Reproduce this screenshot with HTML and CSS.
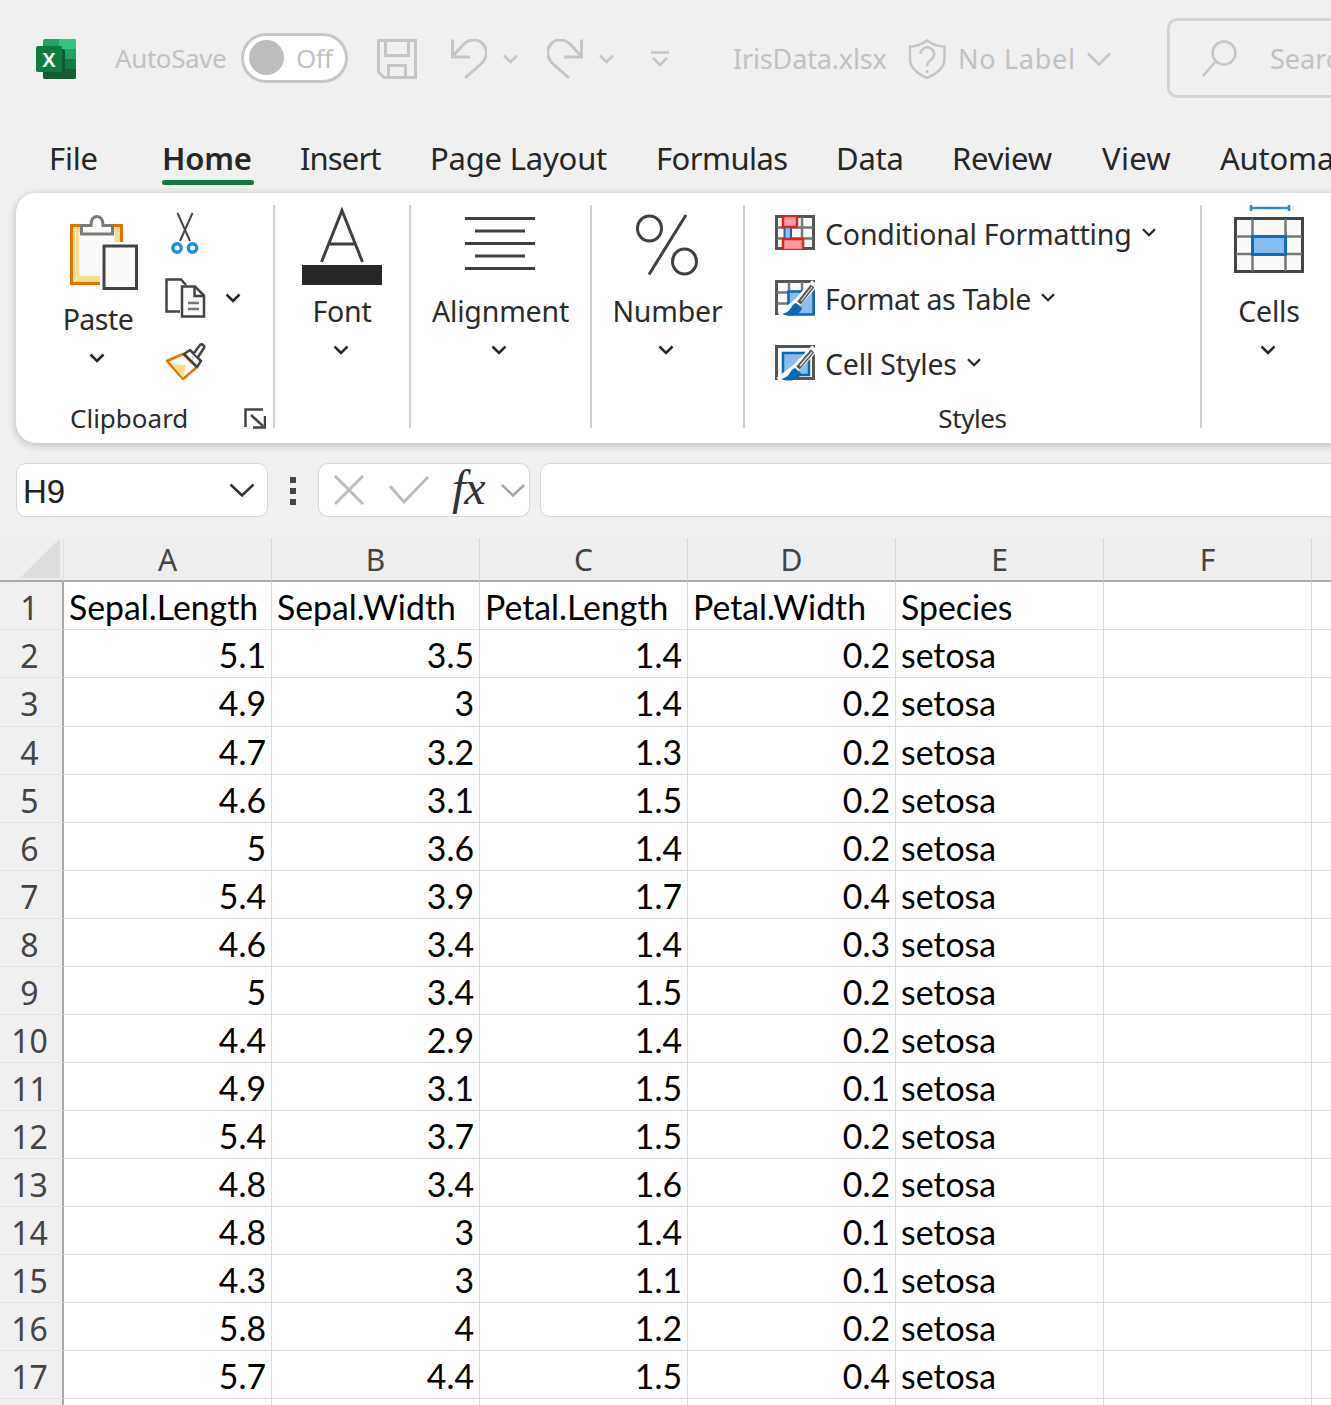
FILE: index.html
```html
<!DOCTYPE html>
<html lang="en">
<head>
<meta charset="utf-8">
<title>IrisData.xlsx</title>
<link rel="stylesheet" href="styles.css">
</head>
<body>
<div class="app">
  <header class="titlebar">
    <svg class="logo" width="40" height="40" viewBox="36 38 40 40">
      <rect x="43" y="38" width="33" height="40" rx="2" fill="#21a366"/>
      <path d="M59 38h15a2 2 0 0 1 2 2v8H59z" fill="#33c481"/>
      <path d="M59 58h17v10H59z" fill="#107c41"/>
      <path d="M43 68h33v8a2 2 0 0 1-2 2H45a2 2 0 0 1-2-2z" fill="#185c37"/>
      <rect x="43" y="48" width="22" height="26" rx="2" fill="#0f5a32"/>
      <rect x="36" y="45" width="26" height="26" rx="2" fill="#107c41"/>
      <text x="49" y="65.500" class="logo-x">X</text>
    </svg>
    <span class="t-dim t-autosave">AutoSave</span>
    <div class="toggle"><span class="knob"></span><span class="t-dim toggle-text">Off</span></div>
    <svg class="ml-save" width="40" height="40" viewBox="377 39 40 40" fill="none" stroke="#c6c6c6" stroke-width="3">
      <path d="M378.500 40.500H415.500V77.500H384L378.500 72z"/>
      <path d="M385.500 41V55.500H408.500V41"/>
      <path d="M388.500 77V65.500H405.500V77"/>
    </svg>
    <svg class="ml-undo" width="36" height="40" viewBox="451 39 36 40" fill="none" stroke="#c6c6c6" stroke-width="3">
      <path d="M452.500 39.500V57H470"/>
      <path d="M453 56L462 46C468 39 478 38 483 44C488 50 487 57 482 63L465 78"/>
    </svg>
    <svg class="ml-chev" width="15" height="10" viewBox="0 0 15 10" fill="none" stroke="#c6c6c6" stroke-width="2.500"><path d="M1 1.500L7.500 8L14 1.500"/></svg>
    <svg class="ml-redo" width="36" height="40" viewBox="547 39 36 40" fill="none" stroke="#c6c6c6" stroke-width="3">
      <path d="M581.500 39.500V57H564"/>
      <path d="M581 56L572 46C566 39 556 38 551 44C546 50 547 57 552 63L569 78"/>
    </svg>
    <svg class="ml-chev" width="15" height="10" viewBox="0 0 15 10" fill="none" stroke="#c6c6c6" stroke-width="2.500"><path d="M1 1.500L7.500 8L14 1.500"/></svg>
    <svg class="ml-qat" width="18" height="16" viewBox="0 0 18 16" fill="none" stroke="#c6c6c6" stroke-width="2.500"><path d="M0 1.500H18M2 7L9 14L16 7"/></svg>
    <span class="t-dim t-file">IrisData.xlsx</span>
    <svg class="ml-shield" width="38" height="40" viewBox="908 38 38 40" fill="none" stroke="#c6c6c6" stroke-width="2.500">
      <path d="M927 39.500C921 44 915 45.500 910 45.500V58C910 67 918 73 927 77C936 73 944.500 67 944.500 58V45.500C939 45.500 933 44 927 39.500Z"/>
      <path d="M920.500 53a6.800 6.800 0 1 1 11 5.500c-3 2-4.500 3.500-4.500 7"/>
      <path d="M927 69v3"/>
    </svg>
    <span class="t-dim t-label">No Label</span>
    <svg class="ml-labelchev" width="24" height="14" viewBox="0 0 24 14" fill="none" stroke="#c6c6c6" stroke-width="2.500"><path d="M1 1.500L12 12.500L23 1.500"/></svg>
    <div class="search">
      <svg width="36" height="38" viewBox="1201 39 36 38" fill="none" stroke="#c6c6c6" stroke-width="2.500">
        <circle cx="1224" cy="52" r="11.500"/><path d="M1215.500 60.500L1203 75"/>
      </svg>
      <span class="t-dim t-search">Search</span>
    </div>
  </header>

  <nav class="tabs">
    <span class="tab">File</span>
    <div class="tab tab-home">Home<span class="tab-bar"></span></div>
    <span class="tab tab-insert">Insert</span>
    <span class="tab">Page Layout</span>
    <span class="tab tab-formulas">Formulas</span>
    <span class="tab">Data</span>
    <span class="tab">Review</span>
    <span class="tab tab-view">View</span>
    <span class="tab">Automate</span>
  </nav>

  <section class="ribbon">
    <div class="group g-clip">
      <div class="clip-top">
        <div class="paste">
          <svg class="paste-icon" width="68" height="88" viewBox="70 205 68 88">
            <rect x="71.500" y="225.500" width="50" height="58" fill="#fddc8f" stroke="#e67300" stroke-width="3"/>
            <rect x="79" y="232" width="36" height="44" fill="#fafafa"/>
            <path d="M81.500 225.500H91C91 219 93 216.500 97 216.500C101 216.500 103 219 103 225.500H112.500V234H81.500z" fill="#fafafa" stroke="#7d7a76" stroke-width="3"/>
            <rect x="100" y="242" width="38" height="50" fill="#fff"/>
            <rect x="104" y="246" width="32.500" height="42.500" fill="#fafafa" stroke="#444" stroke-width="3"/>
          </svg>
          <span class="rlabel paste-label">Paste</span>
          <svg class="chev" width="16" height="10" viewBox="0 0 16 10" fill="none" stroke="#262626" stroke-width="2.500"><path d="M1.500 1.500L8 8L14.500 1.500"/></svg>
        </div>
        <div class="clip-tools">
          <div class="tool">
            <svg width="44" height="46" viewBox="163 210 44 46" fill="none">
              <path d="M177.500 213L190 241M192.500 213L180 241" stroke="#444" stroke-width="2"/>
              <circle cx="177" cy="248" r="4.200" stroke="#1e8fd5" stroke-width="3.400" fill="#fff"/>
              <circle cx="192.500" cy="248" r="4.200" stroke="#1e8fd5" stroke-width="3.400" fill="#fff"/>
            </svg>
          </div>
          <div class="tool">
            <svg width="44" height="44" viewBox="163 276 44 44" fill="none" stroke="#444" stroke-width="2.500">
              <path d="M180 311.500H166.500V279.500H181L186 285"/>
              <path d="M182 286.500H195L204 295.500V316.500H182z" fill="#fafafa"/>
              <path d="M194.500 287V296H203.500"/>
              <path d="M188 303H199M188 309H199" stroke="#777"/>
            </svg>
            <svg class="chev-copy" width="16" height="10" viewBox="0 0 16 10" fill="none" stroke="#262626" stroke-width="2.500"><path d="M1.500 1.500L8 8L14.500 1.500"/></svg>
          </div>
          <div class="tool">
            <svg width="44" height="44" viewBox="163 340 44 44">
              <path d="M167 361L183 354L197 367L183 379z" fill="#fff" stroke="#e67300" stroke-width="2.500" stroke-linejoin="round"/>
              <path d="M172 364L186 365L183 378z" fill="#fddc8f"/>
              <path d="M184 354L191 361L197 367L201 361L190 350z" fill="#fafafa" stroke="#444" stroke-width="2.500" stroke-linejoin="round"/>
              <path d="M194 353L200 345C202 343 205 346 204 348L198 357" fill="#fafafa" stroke="#444" stroke-width="2.500"/>
            </svg>
          </div>
        </div>
      </div>
      <div class="gfoot clip-foot">
        <span class="rlabel">Clipboard</span>
        <svg class="launcher" width="22" height="22" viewBox="244 407 22 22" fill="none" stroke="#444" stroke-width="2.500">
          <path d="M245.500 427V409.500H263"/>
          <path d="M251 415L263 426M265 416V427.500H253"/>
        </svg>
      </div>
    </div>

    <div class="group g-big g-font">
      <svg class="bigicon" width="80" height="87" viewBox="302 205 80 87">
        <path d="M321.500 262L342 210.500L362.500 262M327.500 244H356.500" fill="none" stroke="#404040" stroke-width="3"/>
        <rect x="302" y="265" width="80" height="20" fill="#262626"/>
      </svg>
      <span class="rlabel big-label">Font</span>
      <svg class="chev" width="16" height="10" viewBox="0 0 16 10" fill="none" stroke="#262626" stroke-width="2.500"><path d="M1.500 1.500L8 8L14.500 1.500"/></svg>
    </div>

    <div class="group g-big g-align">
      <svg class="bigicon" width="70" height="87" viewBox="465 205 70 87" fill="none" stroke="#404040" stroke-width="3">
        <path d="M465 218.500H535M475 231H525M465 243.500H535M475 256H525M465 268.500H535"/>
      </svg>
      <span class="rlabel big-label">Alignment</span>
      <svg class="chev" width="16" height="10" viewBox="0 0 16 10" fill="none" stroke="#262626" stroke-width="2.500"><path d="M1.500 1.500L8 8L14.500 1.500"/></svg>
    </div>

    <div class="group g-big g-number">
      <svg class="bigicon" width="64" height="87" viewBox="635 205 64 87" fill="none" stroke="#404040" stroke-width="3">
        <ellipse cx="649.500" cy="228.500" rx="12" ry="12.500"/>
        <ellipse cx="684.500" cy="261.500" rx="12" ry="12.500"/>
        <path d="M686 215L649 274.500"/>
      </svg>
      <span class="rlabel big-label">Number</span>
      <svg class="chev" width="16" height="10" viewBox="0 0 16 10" fill="none" stroke="#262626" stroke-width="2.500"><path d="M1.500 1.500L8 8L14.500 1.500"/></svg>
    </div>

    <div class="group g-styles">
      <div class="style-row">
        <svg width="40" height="35" viewBox="775 215 40 35">
          <rect x="776.500" y="216.500" width="37" height="32" fill="#fafafa" stroke="#555" stroke-width="3"/>
          <path d="M789 217V248M802 217V248M777 227.500H813M777 238.500H813" stroke="#777" stroke-width="2.500" fill="none"/>
          <rect x="784.500" y="227" width="6.500" height="12" fill="#8cc0ee" stroke="#0b6abf" stroke-width="2"/>
          <rect x="783" y="216" width="14" height="11" fill="#ff9aa2" stroke="#d9261c" stroke-width="2.500"/>
          <rect x="783" y="239" width="20" height="11" fill="#ff9aa2" stroke="#d9261c" stroke-width="2.500"/>
        </svg>
        <span class="rlabel">Conditional Formatting</span>
        <svg class="chev-style" width="14" height="9" viewBox="0 0 14 9" fill="none" stroke="#262626" stroke-width="2.300"><path d="M1 1.200L7 7.200L13 1.200"/></svg>
      </div>
      <div class="style-row">
        <svg width="40" height="36" viewBox="775 280 40 36">
          <rect x="776.500" y="281.500" width="37" height="32" fill="#fafafa" stroke="#555" stroke-width="3"/>
          <path d="M789 282V313M802 282V313M777 292.500H813M777 303.500H813" stroke="#777" stroke-width="2.500" fill="none"/>
          <rect x="788.500" y="291.500" width="25" height="23" fill="#8abdf0" stroke="#0a68b8" stroke-width="2.500"/>
          <path d="M815 283L797 303L780 316" stroke="#fff" stroke-width="8" fill="none"/>
          <path d="M812.500 286L799 303" stroke="#555" stroke-width="4.500" fill="none"/>
          <path d="M812 287L801 301" stroke="#eee" stroke-width="1.200" fill="none"/>
          <path d="M796 303C790 305 792 312 782 314C790 317 800 316 802 308z" fill="#0a68b8"/>
        </svg>
        <span class="rlabel label-table">Format as Table</span>
        <svg class="chev-style" width="14" height="9" viewBox="0 0 14 9" fill="none" stroke="#262626" stroke-width="2.300"><path d="M1 1.200L7 7.200L13 1.200"/></svg>
      </div>
      <div class="style-row">
        <svg width="40" height="36" viewBox="775 345 40 36">
          <rect x="776.500" y="346.500" width="37" height="32" fill="#fafafa" stroke="#555" stroke-width="3"/>
          <rect x="783" y="353" width="26" height="22" fill="#8abdf0" stroke="#0a68b8" stroke-width="2.500"/>
          <path d="M815 348L796 368L779 381" stroke="#fff" stroke-width="8" fill="none"/>
          <path d="M812.500 351L798 368" stroke="#555" stroke-width="4.500" fill="none"/>
          <path d="M812 352L800 366" stroke="#eee" stroke-width="1.200" fill="none"/>
          <path d="M795 368C789 370 791 377 781 379C789 382 799 381 801 373z" fill="#0a68b8"/>
        </svg>
        <span class="rlabel">Cell Styles</span>
        <svg class="chev-style" width="14" height="9" viewBox="0 0 14 9" fill="none" stroke="#262626" stroke-width="2.300"><path d="M1 1.200L7 7.200L13 1.200"/></svg>
      </div>
      <div class="gfoot styles-foot"><span class="rlabel">Styles</span></div>
    </div>

    <div class="group g-big g-cells">
      <svg class="bigicon" width="70" height="87" viewBox="1234 205 70 87">
        <path d="M1251 205V211M1289 205V211M1251 208H1289" stroke="#2b8fd6" stroke-width="2.500" fill="none"/>
        <rect x="1235.500" y="218.500" width="67" height="53" fill="#fafafa" stroke="#444" stroke-width="3"/>
        <path d="M1252.500 219V271M1285.500 219V271M1236 236.500H1302M1236 254H1302" stroke="#777" stroke-width="2.500" fill="none"/>
        <rect x="1252.500" y="236.500" width="33" height="18" fill="#86bdee" stroke="#0f6cbd" stroke-width="3"/>
      </svg>
      <span class="rlabel big-label">Cells</span>
      <svg class="chev" width="16" height="10" viewBox="0 0 16 10" fill="none" stroke="#262626" stroke-width="2.500"><path d="M1.500 1.500L8 8L14.500 1.500"/></svg>
    </div>
  </section>

  <section class="fbar">
    <div class="fbox namebox">
      <span class="name-text">H9</span>
      <svg width="26" height="14" viewBox="0 0 26 14" fill="none" stroke="#333" stroke-width="2.500"><path d="M1.500 1.500L13 12.500L24.500 1.500"/></svg>
    </div>
    <div class="dots"><span></span><span></span><span></span></div>
    <div class="fbox fxbox">
      <svg width="30" height="30" viewBox="0 0 30 30" fill="none" stroke="#bdbdbd" stroke-width="3"><path d="M1 1L29 29M29 1L1 29"/></svg>
      <svg class="ml-check" width="40" height="28" viewBox="0 0 40 28" fill="none" stroke="#bdbdbd" stroke-width="3"><path d="M1 10L15 26L39 1"/></svg>
      <span class="fx">fx</span>
      <svg class="ml-fxchev" width="24" height="13" viewBox="0 0 24 13" fill="none" stroke="#a6a6a6" stroke-width="2.500"><path d="M1 1L12 11.500L23 1"/></svg>
    </div>
    <div class="fbox finput"></div>
  </section>

  <section class="sheet">
    <div class="row row-head">
      <div class="corner"><svg width="40" height="40" viewBox="0 0 40 40"><path d="M40 0V40H0z" fill="#dedede"/></svg></div>
      <div class="ch">A</div><div class="ch">B</div><div class="ch">C</div><div class="ch">D</div><div class="ch">E</div><div class="ch">F</div><div class="ch"></div>
    </div>
    <div class="row"><div class="rh">1</div><div class="c">Sepal.Length</div><div class="c">Sepal.Width</div><div class="c">Petal.Length</div><div class="c">Petal.Width</div><div class="c">Species</div><div class="c"></div><div class="c"></div></div>
    <div class="row"><div class="rh">2</div><div class="c n">5.1</div><div class="c n">3.5</div><div class="c n">1.4</div><div class="c n">0.2</div><div class="c">setosa</div><div class="c"></div><div class="c"></div></div>
    <div class="row row-tall"><div class="rh">3</div><div class="c n">4.9</div><div class="c n">3</div><div class="c n">1.4</div><div class="c n">0.2</div><div class="c">setosa</div><div class="c"></div><div class="c"></div></div>
    <div class="row"><div class="rh">4</div><div class="c n">4.7</div><div class="c n">3.2</div><div class="c n">1.3</div><div class="c n">0.2</div><div class="c">setosa</div><div class="c"></div><div class="c"></div></div>
    <div class="row"><div class="rh">5</div><div class="c n">4.6</div><div class="c n">3.1</div><div class="c n">1.5</div><div class="c n">0.2</div><div class="c">setosa</div><div class="c"></div><div class="c"></div></div>
    <div class="row"><div class="rh">6</div><div class="c n">5</div><div class="c n">3.6</div><div class="c n">1.4</div><div class="c n">0.2</div><div class="c">setosa</div><div class="c"></div><div class="c"></div></div>
    <div class="row"><div class="rh">7</div><div class="c n">5.4</div><div class="c n">3.9</div><div class="c n">1.7</div><div class="c n">0.4</div><div class="c">setosa</div><div class="c"></div><div class="c"></div></div>
    <div class="row"><div class="rh">8</div><div class="c n">4.6</div><div class="c n">3.4</div><div class="c n">1.4</div><div class="c n">0.3</div><div class="c">setosa</div><div class="c"></div><div class="c"></div></div>
    <div class="row"><div class="rh">9</div><div class="c n">5</div><div class="c n">3.4</div><div class="c n">1.5</div><div class="c n">0.2</div><div class="c">setosa</div><div class="c"></div><div class="c"></div></div>
    <div class="row"><div class="rh">10</div><div class="c n">4.4</div><div class="c n">2.9</div><div class="c n">1.4</div><div class="c n">0.2</div><div class="c">setosa</div><div class="c"></div><div class="c"></div></div>
    <div class="row"><div class="rh">11</div><div class="c n">4.9</div><div class="c n">3.1</div><div class="c n">1.5</div><div class="c n">0.1</div><div class="c">setosa</div><div class="c"></div><div class="c"></div></div>
    <div class="row"><div class="rh">12</div><div class="c n">5.4</div><div class="c n">3.7</div><div class="c n">1.5</div><div class="c n">0.2</div><div class="c">setosa</div><div class="c"></div><div class="c"></div></div>
    <div class="row"><div class="rh">13</div><div class="c n">4.8</div><div class="c n">3.4</div><div class="c n">1.6</div><div class="c n">0.2</div><div class="c">setosa</div><div class="c"></div><div class="c"></div></div>
    <div class="row"><div class="rh">14</div><div class="c n">4.8</div><div class="c n">3</div><div class="c n">1.4</div><div class="c n">0.1</div><div class="c">setosa</div><div class="c"></div><div class="c"></div></div>
    <div class="row"><div class="rh">15</div><div class="c n">4.3</div><div class="c n">3</div><div class="c n">1.1</div><div class="c n">0.1</div><div class="c">setosa</div><div class="c"></div><div class="c"></div></div>
    <div class="row"><div class="rh">16</div><div class="c n">5.8</div><div class="c n">4</div><div class="c n">1.2</div><div class="c n">0.2</div><div class="c">setosa</div><div class="c"></div><div class="c"></div></div>
    <div class="row"><div class="rh">17</div><div class="c n">5.7</div><div class="c n">4.4</div><div class="c n">1.5</div><div class="c n">0.4</div><div class="c">setosa</div><div class="c"></div><div class="c"></div></div>
    <div class="row"><div class="rh"></div><div class="c"></div><div class="c"></div><div class="c"></div><div class="c"></div><div class="c"></div><div class="c"></div><div class="c"></div></div>
  </section>
</div>
</body>
</html>
```
FILE: styles.css
```css
* { box-sizing: border-box; }
html, body { margin: 0; padding: 0; }
body { background: #f0f0f0; }
svg { display: block; flex: none; }

.app {
  width: 1331px;
  height: 1405px;
  overflow: hidden;
  background: #f0f0f0;
  font-family: "Noto Sans", "Open Sans", sans-serif;
  color: #262626;
}

/* Title bar */
.titlebar {
  display: flex;
  align-items: center;
  height: 118px;
  padding-left: 36px;
  width: 1700px;
}
.titlebar > * { flex: none; }
.logo-x { font: 700 20px "Liberation Sans", sans-serif; fill: #fff; text-anchor: middle; }
.t-dim { color: #c2c2c2; font-size: 27px; line-height: 36px; white-space: nowrap; }
.t-autosave { margin-left: 39px; margin-top: -2px; width: 126px; font-size: 26px; letter-spacing: -0.4px; }
.toggle {
  width: 107px;
  height: 50px;
  border: 3px solid #c6c6c6;
  border-radius: 25px;
  background: #fff;
  display: flex;
  align-items: center;
  padding-left: 5px;
  margin-top: -3px;
}
.knob { width: 35px; height: 35px; border-radius: 50%; background: #bdbdbd; }
.toggle-text { margin-left: 12px; font-size: 26px; letter-spacing: -0.6px; }
.ml-save { margin-left: 29px; }
.ml-undo { margin-left: 34px; }
.ml-chev { margin-left: 16px; }
.ml-redo { margin-left: 29px; }
.ml-qat { margin-left: 37px; }
.t-file { margin-left: 64px; width: 154px; letter-spacing: -0.15px; }
.ml-shield { margin-left: 21px; }
.t-label { margin-left: 12px; width: 116px; letter-spacing: 0.7px; }
.ml-labelchev { margin-left: 13px; }
.search {
  margin-left: 56px;
  margin-top: -3px;
  width: 400px;
  height: 80px;
  padding-top: 2px;
  border: 3px solid #d4d4d4;
  border-radius: 10px;
  display: flex;
  align-items: center;
  padding-left: 31px;
}
.t-search { margin-left: 33px; }

/* Tabs */
.tabs {
  display: grid;
  grid-template-columns: 113px 137px 131px 226px 180px 116px 149px 119px 200px;
  padding-left: 49px;
  height: 67px;
  width: 1600px;
  font-size: 31px;
  line-height: 38px;
  padding-top: 21px;
  white-space: nowrap;
}
.tab { letter-spacing: -0.2px; }
.tab-insert { letter-spacing: -0.9px; padding-left: 1px; }
.tab-formulas { letter-spacing: -0.55px; }
.tab-view { letter-spacing: 0.3px; padding-left: 1px; }
.tab-home { font-weight: 600; display: flex; flex-direction: column; align-items: flex-start; }
.tab-bar {
  display: block;
  width: 92px;
  height: 5px;
  margin-top: 3px;
  border-radius: 2.5px;
  background: #107c41;
}

/* Ribbon */
.ribbon {
  display: flex;
  margin: 8px 0 0 16px;
  width: 1400px;
  height: 250px;
  padding-top: 12px;
  background: #fff;
  border-radius: 20px 0 0 20px;
  box-shadow: 0 2px 9px rgba(0, 0, 0, 0.24);
}
.rlabel { font-size: 28.5px; line-height: 36px; letter-spacing: -0.18px; white-space: nowrap; color: #2b2b2b; }
.group {
  height: 223px;
  border-right: 2px solid #cfcfcf;
  display: flex;
  flex: none;
  flex-direction: column;
}
.g-clip { width: 259px; }
.g-big { align-items: center; }
.g-font { width: 136px; }
.g-align { width: 181px; }
.g-number { width: 153px; }
.g-styles { width: 457px; padding-left: 30px; padding-top: 10px; }
.g-cells { width: 134px; border-right: 0; }
.big-label { line-height: 38px; }
.chev { margin-top: 15px; }
.g-font .chev, .g-cells .chev { margin-right: 2px; }
.g-align .chev, .g-number .chev { margin-right: 4px; }
.g-align .bigicon, .g-number .bigicon { margin-right: 2px; }

.clip-top { display: flex; flex: 1; min-height: 0; }
.paste { width: 100px; margin-left: 32px; display: flex; flex-direction: column; align-items: center; }
.paste-icon { margin-left: 12px; }
.paste-label { margin-top: 8px; letter-spacing: -0.5px; }
.paste .chev { margin-top: 16px; margin-left: -2px; }
.clip-tools { margin-left: 15px; display: flex; flex-direction: column; gap: 20px; padding-top: 5px; }
.tool { display: flex; align-items: center; }
.chev-copy { margin-left: 18px; }
.gfoot { height: 32px; margin-bottom: -6px; flex: none; }
.gfoot .rlabel { line-height: 32px; font-size: 26px; letter-spacing: 0; }
.clip-foot { display: flex; align-items: center; padding-left: 54px; }
.launcher { margin-left: auto; margin-right: 7px; }
.style-row { display: flex; align-items: center; height: 35px; }
.style-row + .style-row { margin-top: 30px; }
.style-row .rlabel { margin-left: 10px; position: relative; top: 1px; }
.style-row .label-table { letter-spacing: -0.38px; }
.chev-style { margin-left: 10px; }
.styles-foot { margin-top: auto; margin-left: -30px; text-align: center; }
.styles-foot .rlabel { letter-spacing: -0.4px; }

/* Formula bar */
.fbar {
  display: flex;
  margin-top: 20px;
  padding-left: 16px;
  height: 54px;
  width: 1500px;
}
.fbox {
  background: #fff;
  border: 1px solid #d6d6d6;
  border-radius: 10px;
  display: flex;
  align-items: center;
}
.namebox { width: 252px; padding: 0 12px 0 6px; justify-content: space-between; }
.name-text { font: 33px/40px "Liberation Sans", sans-serif; color: #222; padding-top: 3px; }
.dots { width: 50px; display: flex; flex-direction: column; align-items: center; gap: 5px; padding-top: 14px; }
.dots span { width: 6px; height: 6px; background: #444; }
.fxbox { width: 212px; padding-left: 15px; }
.ml-check { margin-left: 25px; }
.fx { font: italic 48px/50px "Liberation Serif", serif; color: #333; margin: 0 0 5px 23px; width: 39px; letter-spacing: -1px; }
.ml-fxchev { margin-left: 10px; }
.finput { margin-left: 10px; flex: 1; }

/* Sheet */
.sheet { margin-top: 21px; }
.row {
  display: grid;
  grid-template-columns: 64px repeat(6, 208px) 120px;
  width: 1432px;
  height: 48px;
  background: #fff;
}
.row-tall { height: 49px; }
.row-head { height: 44px; background: #eee; }
.corner { padding: 0 0 0 20px; background: #eee; border-bottom: 2px solid #a9a9a9; border-right: 1px solid #e0e0e0; }
.ch {
  border-right: 1px solid #d8d8d8;
  border-bottom: 2px solid #a9a9a9;
  text-align: center;
  font-size: 30px;
  line-height: 41px;
  padding-top: 1px;
  color: #444;
}
.rh {
  background: #f0f0f0;
  border-right: 2px solid #a9a9a9;
  border-bottom: 1px solid #e2e2e2;
  text-align: center;
  font-size: 32px;
  line-height: 43px;
  padding: 4px 3px 0 0;
  color: #444;
}
.c {
  border-right: 1px solid #dcdcdc;
  border-bottom: 1px solid #dcdcdc;
  font-family: "Lato", sans-serif;
  font-size: 33.8px;
  line-height: 44px;
  color: #000;
  padding: 3px 5px 0;
  white-space: nowrap;
  overflow: hidden;
}
.n { text-align: right; }
```
